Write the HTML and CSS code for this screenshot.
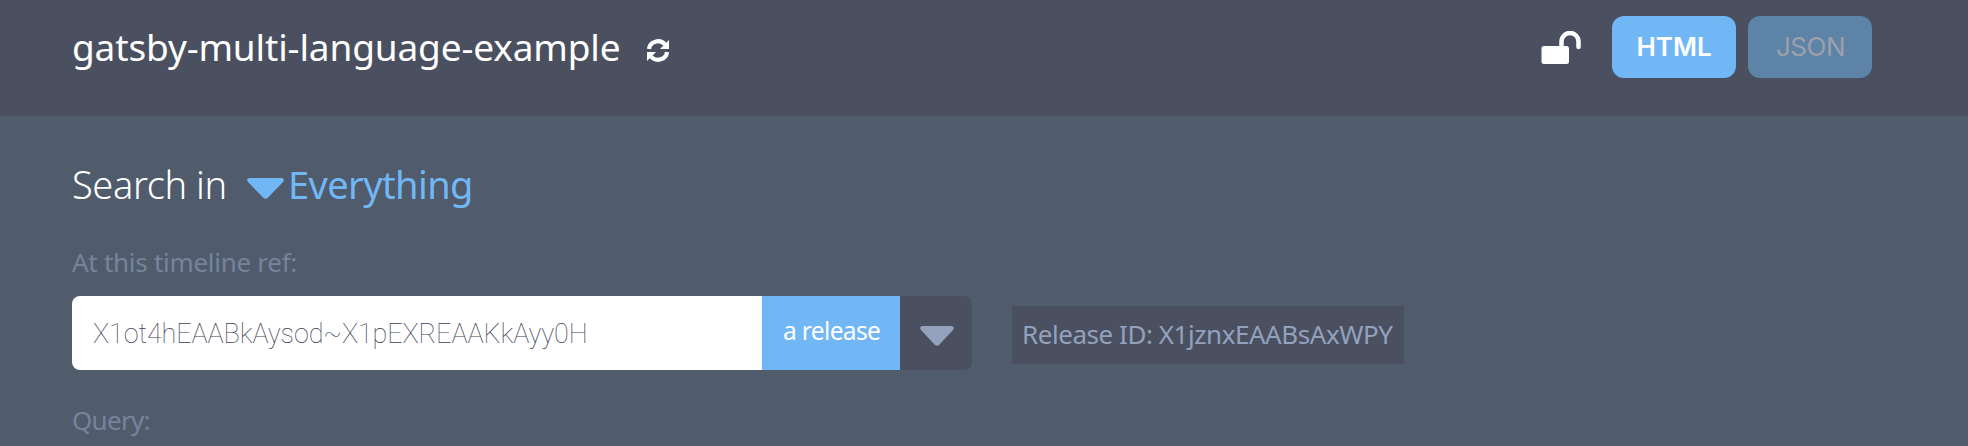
FILE: index.html
```html
<!DOCTYPE html>
<html lang="en">
<head>
<meta charset="utf-8">
<title>gatsby-multi-language-example</title>
<link rel="stylesheet" href="styles.css">
</head>
<body>
<header class="topbar">
  <h1 class="repo">gatsby-multi-language-example</h1>
  <svg class="refresh" viewBox="0 0 22 24" width="22" height="24"><path d="M2 11A9 8.500 0 0 1 18 6.500" fill="none" stroke="#fff" stroke-width="4.200"/><path d="M22 2v9H13z" fill="#fff"/><path d="M20 14A9 8.500 0 0 1 4 18.500" fill="none" stroke="#fff" stroke-width="4.200"/><path d="M0 23V14h9z" fill="#fff"/></svg>
  <div class="actions">
    <svg class="lock" viewBox="0 0 40 33" width="40" height="33"><rect x="0.500" y="15" width="27.500" height="18" rx="2.500" fill="#fff"/><path d="M20.500 16V10.500a8.500 8.500 0 0 1 17 0V16" fill="none" stroke="#fff" stroke-width="4.500" stroke-linecap="round"/></svg>
    <button class="format active">HTML</button>
    <button class="format inactive"><span>JSON</span></button>
  </div>
</header>
<main class="content">
  <div class="search">
    <span class="search-label">Search in</span>
    <svg class="caret" viewBox="0 0 37 21" width="37" height="21"><path d="M2 0H35Q38 1 36 4L21 19.500Q18.500 22 16 19.500L1 4Q-1 1 2 0z" fill="#72b7f5"/></svg>
    <span class="search-scope">Everything</span>
  </div>
  <div class="label timeline">At this timeline ref:</div>
  <div class="row">
    <div class="ref">
      <div class="ref-input"><span>X1ot4hEAABkAysod~X1pEXREAAKkAyy0H</span></div>
      <div class="ref-kind"><span>a release</span></div>
      <div class="ref-toggle"><svg viewBox="0 0 34 20" width="34" height="20"><path d="M2 0H32Q35 1 33 4L19.500 18.500Q17 21 14.500 18.500L1 4Q-1 1 2 0z" fill="#93a1bd"/></svg></div>
    </div>
    <div class="release-id"><span>Release ID: X1jznxEAABsAxWPY</span></div>
  </div>
  <div class="label query">Query:</div>
</main>
</body>
</html>
```
FILE: styles.css
```css
* { box-sizing: border-box; }
body { margin: 0; height: 446px; overflow: hidden; background: #505c6c; font-family: "Noto Sans", sans-serif; color: #fff; white-space: nowrap; }
.topbar { height: 116px; background: #4a5060; padding: 0 96px 0 72px; display: flex; align-items: flex-start; }
.repo { margin: 20px 0 0; width: 548px; font-size: 37px; line-height: 53px; font-weight: 400; letter-spacing: -0.14px; }
.refresh { margin: 38px 0 0 27px; }
.actions { margin-left: auto; padding-top: 16px; display: flex; align-items: flex-start; }
.lock { margin: 15px 31px 0 0; }
.format { width: 124px; height: 62px; border: 0; border-radius: 12px; padding: 0; font: 600 26px/62px Inter, sans-serif; color: #fff; background: #72b7f5; }
.inactive { margin-left: 12px; padding-left: 1px; background: #5d83a7; color: #9ba0aa; font-weight: 400; letter-spacing: -0.5px; }
.content { padding-left: 72px; }
.search { display: flex; align-items: flex-start; height: 54px; margin-top: 42px; line-height: 52px; }
.search-label { width: 175px; font-size: 38px; font-weight: 300; letter-spacing: -0.4px; }
.search-scope { margin-left: 4px; font-size: 38px; font-weight: 400; color: #72b7f5; letter-spacing: -0.6px; }
.caret { margin-top: 20px; }
.label { font-size: 26px; line-height: 34px; height: 36px; color: #76839c; letter-spacing: -0.28px; }
.timeline { margin-top: 33px; }
.row { display: flex; align-items: center; margin-top: 15px; height: 74px; }
.ref { display: flex; height: 74px; border-radius: 8px; overflow: hidden; }
.ref-input { width: 690px; padding-left: 21px; background: #fff; color: #3d4455; font: 100 27px/77px Roboto, sans-serif; letter-spacing: -0.1px; }
.ref-kind { width: 138px; padding-left: 21px; background: #72b7f5; font-size: 24.5px; font-weight: 400; line-height: 70px; letter-spacing: -0.65px; }
.ref-toggle { width: 72px; padding: 30px 0 0 20px; background: #4a5060; }
.ref-toggle svg { display: block; }
.release-id { width: 392px; height: 58px; margin: 4px 0 0 40px; padding-left: 10px; background: #4a5060; color: #93a1bd; font-size: 26px; line-height: 56px; letter-spacing: -0.45px; }
.query { margin-top: 33px; letter-spacing: -0.7px; }
```
